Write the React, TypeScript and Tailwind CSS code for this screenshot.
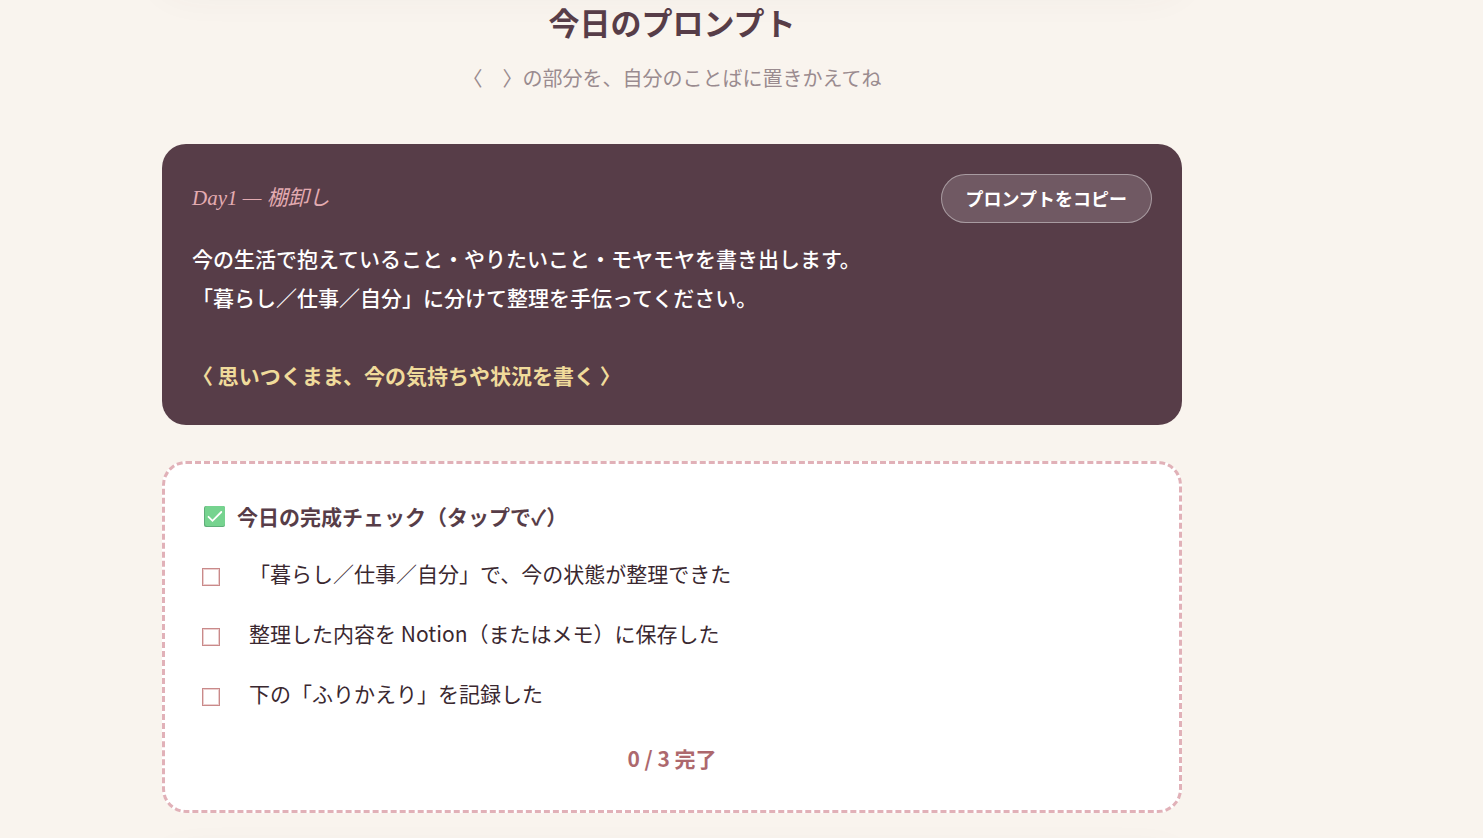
import { useState } from "react";

const PROMPT_LINES = [
  "今の生活で抱えていること・やりたいこと・モヤモヤを書き出します。",
  "「暮らし／仕事／自分」に分けて整理を手伝ってください。"
];
const PROMPT_SLOT = "〈 思いつくまま、今の気持ちや状況を書く 〉";

const CHECKS = [
  "「暮らし／仕事／自分」で、今の状態が整理できた",
  "整理した内容を Notion（またはメモ）に保存した",
  "下の「ふりかえり」を記録した"
];

function CheckMarkIcon() {
  return (
    <svg aria-hidden className="shrink-0" width="25" height="24" viewBox="0 0 25 24">
      <rect x="2" y="2" width="21" height="21" rx="2" fill="#5fae79" />
      <rect x="3" y="2" width="20" height="20" rx="2" fill="#76d38f" />
      <path
        d="M6.5 12.8l4 4L19.3 8"
        fill="none"
        stroke="#fff"
        strokeWidth="1.8"
        strokeLinecap="round"
      />
    </svg>
  );
}

function PromptCard() {
  const copyPrompt = () => {
    navigator.clipboard?.writeText([...PROMPT_LINES, "", PROMPT_SLOT].join("\n"));
  };

  return (
    <section className="rounded-3xl bg-[#573d48] p-[30px]">
      <div className="flex items-center justify-between gap-4">
        <p className="font-['Liberation_Serif','Noto_Sans_CJK_JP',serif] text-[21px] leading-[45px] text-[#e3abb1] italic">
          Day1 — 棚卸し
        </p>
        <button
          type="button"
          onClick={copyPrompt}
          className="rounded-full border border-white/40 bg-white/15 px-6 py-[11px] text-[18px] leading-[25px] font-bold text-white"
        >
          プロンプトをコピー
        </button>
      </div>
      <p className="mt-4 text-[21px] leading-[39px] font-medium text-white">
        {PROMPT_LINES.map((line) => (
          <span key={line} className="block">
            {line}
          </span>
        ))}
        <br />
        <span className="font-bold text-[#f0db9b]">{PROMPT_SLOT}</span>
      </p>
    </section>
  );
}

function CheckCard() {
  const [checked, setChecked] = useState(CHECKS.map(() => false));
  const done = checked.filter(Boolean).length;

  const toggle = (index: number) => {
    setChecked(checked.map((value, i) => (i === index ? !value : value)));
  };

  return (
    <section className="relative mt-9 rounded-3xl border-[3px] border-dashed border-[#e1b1b8] bg-white px-[37px] pt-[35px] pb-[35px]">
      <h2 className="flex items-center gap-[10px] text-[21px] leading-[34px] font-bold text-[#573d48]">
        <CheckMarkIcon />
        今日の完成チェック（タップで✓）
      </h2>
      <ul className="mt-[10px]">
        {CHECKS.map((text, index) => (
          <li key={text}>
            <label className="flex items-center gap-[29px] py-3 text-[21px] leading-9 text-[#3a2830]">
              <input
                type="checkbox"
                checked={checked[index]}
                onChange={() => toggle(index)}
                className="mt-2 size-[18px] shrink-0 appearance-none border border-[#c98a8a] shadow-[inset_0_0_0_1px_#ecd0d0] checked:bg-[#d9a09f]"
              />
              {text}
            </label>
          </li>
        ))}
      </ul>
      <p className="mt-[18px] text-center text-[21px] leading-[34px] font-bold text-[#ad686d]">
        {done} / {CHECKS.length} 完了
      </p>
    </section>
  );
}

export default function App() {
  return (
    <main className="min-h-screen overflow-hidden bg-[#f9f4ee] font-['Noto_Sans_CJK_JP',sans-serif]">
      <div className="max-w-[1344px]">
        <div className="mx-auto max-w-[1020px]">
          <div className="-mt-24 mb-4 h-20 rounded-3xl bg-white shadow-[0_8px_40px_rgba(87,61,72,0.06)]" />
          <header className="mb-[50px] text-center">
            <h1 className="text-[31px] leading-[44px] font-bold text-[#573d48]">
              今日のプロンプト
            </h1>
            <p className="mt-[18px] text-[20px] leading-8 text-[#9a8b8f]">
              〈　〉の部分を、自分のことばに置きかえてね
            </p>
          </header>
          <PromptCard />
          <CheckCard />
          <div className="mt-9 -mb-24 h-20 rounded-3xl bg-white shadow-[0_8px_40px_rgba(87,61,72,0.06)]" />
        </div>
      </div>
    </main>
  );
}
